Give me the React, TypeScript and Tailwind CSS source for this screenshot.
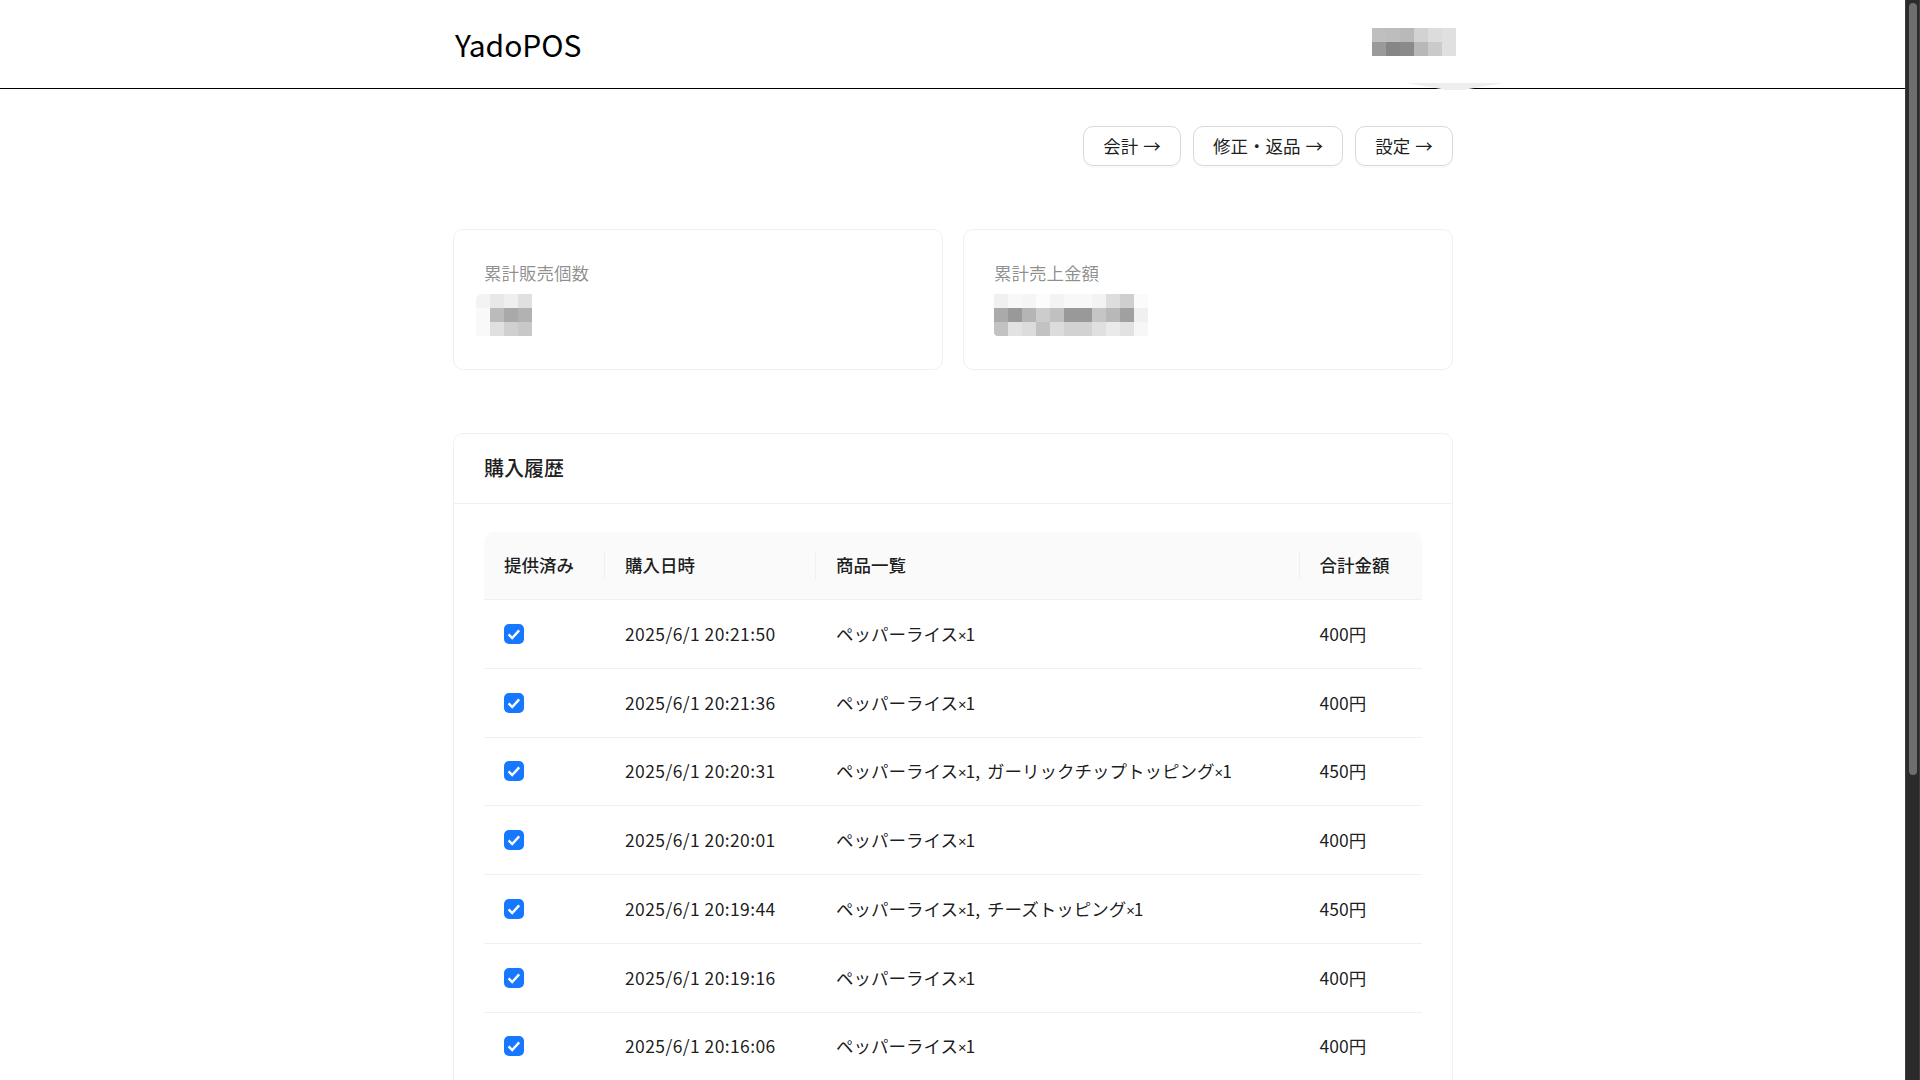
import React from 'react';

const FONT = "font-['Noto_Sans_CJK_JP','Noto_Sans',sans-serif]";

type Order = { date: string; items: string; total: string };

const orders: Order[] = [
  { date: '2025/6/1 20:21:50', items: 'ペッパーライス×1', total: '400円' },
  { date: '2025/6/1 20:21:36', items: 'ペッパーライス×1', total: '400円' },
  { date: '2025/6/1 20:20:31', items: 'ペッパーライス×1, ガーリックチップトッピング×1', total: '450円' },
  { date: '2025/6/1 20:20:01', items: 'ペッパーライス×1', total: '400円' },
  { date: '2025/6/1 20:19:44', items: 'ペッパーライス×1, チーズトッピング×1', total: '450円' },
  { date: '2025/6/1 20:19:16', items: 'ペッパーライス×1', total: '400円' },
  { date: '2025/6/1 20:16:06', items: 'ペッパーライス×1', total: '400円' },
];

// pixelated areas of the screenshot (hidden values)
const userMosaic = [
  ['#bfbfbf', '#bdbdbd', '#b9b9b9', '#d2d2d2', '#dcdcdc', '#e0e0e0'],
  ['#9a9a9a', '#868686', '#8a8a8a', '#b8b8b8', '#cacaca', '#e0e0e0'],
];
const countMosaic = [
  ['#f3f3f3', '#e8e8e8', '#efefef', '#e0e0e0'],
  ['#f9f9f9', '#bbbbbb', '#a9a9a9', '#b2b2b2'],
  ['#f9f9f9', '#e0e0e0', '#d0d0d0', '#c8c8c8'],
];
const salesMosaic = [
  ['#f0f0f0', '#f8f8f8', '#f5f5f5', '#fcfcfc', '#f3f3f3', '#f8f8f8', '#f8f8f8', '#f3f3f3', '#dddddd', '#cfcfcf', '#fbfbfb'],
  ['#aaaaaa', '#999999', '#b5b5b5', '#cccccc', '#c0c0c0', '#999999', '#999999', '#c5c5c5', '#b8b8b8', '#a0a0a0', '#f0f0f0'],
  ['#c2c2c2', '#e2e2e2', '#dcdcdc', '#c2c2c2', '#dcdcdc', '#d2d2d2', '#d2d2d2', '#e0e0e0', '#eaeaea', '#e2e2e2', '#f7f7f7'],
];

const Mosaic: React.FC<{ rows: string[][] }> = ({ rows }) => (
  <svg width={rows[0].length * 14} height={rows.length * 14} shapeRendering="crispEdges" className="block">
    {rows.map((row, y) =>
      row.map((fill, x) => <rect key={`${x}-${y}`} x={x * 14} y={y * 14} width={14} height={14} fill={fill} />)
    )}
  </svg>
);

const Checked: React.FC = () => (
  <span className="flex h-5 w-5 items-center justify-center rounded-[5px] bg-[#1677ff]">
    <svg width="20" height="20" viewBox="0 0 20 20" fill="none">
      <path d="M4.6 10.4 8.2 14l7-7.6" stroke="#fff" strokeWidth="2.4" />
    </svg>
  </span>
);

// the × in the reference is a small latin glyph, not the full width one
const Items: React.FC<{ text: string }> = ({ text }) => (
  <>
    {text.split('×').map((part, i) => (
      <React.Fragment key={i}>
        {i > 0 && <span className="font-['Noto_Sans',sans-serif] text-[15px] tracking-[-1px]">×</span>}
        {part}
      </React.Fragment>
    ))}
  </>
);

const NavButton: React.FC<{ label: string; width: string }> = ({ label, width }) => (
  <button
    className={`h-10 ${width} rounded-[10px] border border-[#d9d9d9] bg-white text-[17.5px] text-black/90 [word-spacing:1px] shadow-[0_2px_0_rgba(0,0,0,0.02)]`}
  >
    {label}
  </button>
);

const StatCard: React.FC<{ label: string; rows: string[][]; shift: string }> = ({ label, rows, shift }) => (
  <div className="h-[141px] rounded-[10px] border border-[#f0f0f0] px-[30px] pt-[29px]">
    <div className="text-[17.5px] leading-[27px] text-black/45">{label}</div>
    <div className={`mt-[8px] w-fit overflow-hidden ${shift}`}>
      <Mosaic rows={rows} />
    </div>
  </div>
);

const headCols = ['提供済み', '購入日時', '商品一覧', '合計金額'];
const ROW = 'grid grid-cols-[121px_211px_483.5px_122.5px] items-center';

export default function App() {
  return (
    <div className={`flex h-screen overflow-hidden bg-white text-black/90 ${FONT}`}>
      <div className="min-w-0 flex-1">
        {/* Header */}
        <header className="h-[89px] border-b border-black">
          <div className="relative mx-auto box-content flex h-[88px] w-[1000px] items-center justify-between pl-px">
            <h1 className="pl-[2px] text-[30px] font-normal text-black">YadoPOS</h1>
            <div className="-mr-[3px] mb-[4px]">
              <Mosaic rows={userMosaic} />
            </div>
            <svg width="96" height="7" viewBox="0 0 96 7" className="absolute top-[83px] left-[955px]">
              <path d="M0 0H96L56 7H40Z" fill="#eeeeee" />
            </svg>
          </div>
        </header>

        <main className="mx-auto box-content w-[1000px] pl-px">
          {/* Actions */}
          <div className="mt-[37px] flex justify-end gap-3">
            <NavButton label="会計 →" width="w-[98px]" />
            <NavButton label="修正・返品 →" width="w-[150px]" />
            <NavButton label="設定 →" width="w-[98px]" />
          </div>

          {/* Totals */}
          <div className="mt-[63px] grid grid-cols-2 gap-5">
            <StatCard label="累計販売個数" rows={countMosaic} shift="-ml-[8px] rounded-tl-[6px]" />
            <StatCard label="累計売上金額" rows={salesMosaic} shift="rounded-bl-[4px]" />
          </div>

          {/* Purchase history */}
          <section className="mt-[63px] rounded-t-[10px] border border-[#f0f0f0]">
            <div className="flex h-[70px] items-center border-b border-[#f0f0f0] px-[30px] pb-[2px] text-[20px] font-medium">
              購入履歴
            </div>
            <div className="px-[30px] pt-[28px]">
              <div className={`${ROW} h-[68px] rounded-t-[10px] border-b border-[#f0f0f0] bg-[#fafafa] text-[17.5px] font-medium`}>
                {headCols.map((col, i) => (
                  <div key={col} className="relative pl-5">
                    {col}
                    {i < headCols.length - 1 && (
                      <span className="absolute top-0 right-0 h-7 w-px bg-[#f0f0f0]" />
                    )}
                  </div>
                ))}
              </div>
              {orders.map((order) => (
                <div key={order.date} className={`${ROW} h-[68.75px] border-b border-[#f0f0f0] text-[17.5px]`}>
                  <div className="pl-5">
                    <Checked />
                  </div>
                  <div className="pl-5 tracking-[0.4px]">{order.date}</div>
                  <div className="pl-5 [word-spacing:3px]">
                    <Items text={order.items} />
                  </div>
                  <div className="pl-5">{order.total}</div>
                </div>
              ))}
            </div>
          </section>
        </main>
      </div>

      {/* Scrollbar of the captured window */}
      <div className="w-[15px] shrink-0 border-x border-[#3d3d3d] bg-[#2b2b2b] pt-[3px] pr-[2px] pl-[3px]">
        <div className="h-[772px] rounded-full bg-[#6e6e6e]" />
      </div>
    </div>
  );
}
